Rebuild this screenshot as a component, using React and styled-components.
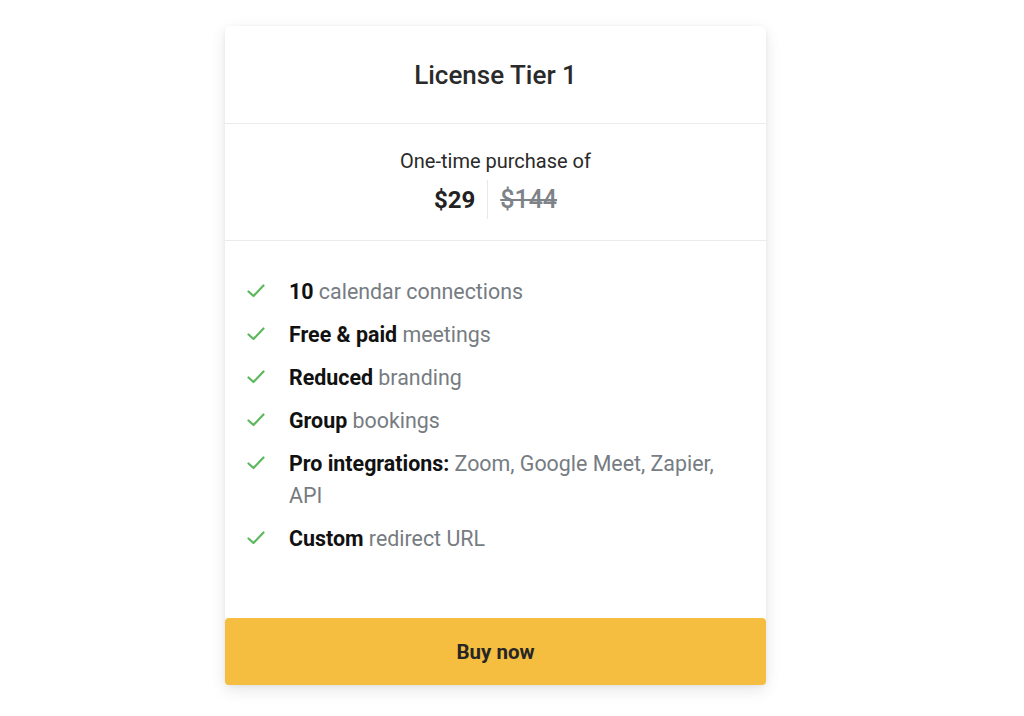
import React from "react";
import styled, { createGlobalStyle } from "styled-components";

const Global = createGlobalStyle`
  html, body { margin: 0; padding: 0; background: #ffffff; }
  body { font-family: Roboto, "Liberation Sans", Arial, sans-serif; -webkit-font-smoothing: antialiased; }
`;

const Page = styled.div`
  width: 1024px;
  height: 716px;
  display: flex;
  justify-content: flex-start;
  align-items: flex-start;
  padding: 26px 0 0 225px;
  box-sizing: border-box;
`;

const Card = styled.div`
  width: 541px;
  background: #fff;
  border-radius: 5px;
  box-shadow: 0 5px 16px rgba(0, 0, 0, 0.1), 0 1px 4px rgba(0, 0, 0, 0.05);
  display: flex;
  flex-direction: column;
`;

const Header = styled.div`
  height: 97px;
  display: flex;
  align-items: center;
  justify-content: center;
  border-bottom: 1px solid #e9ecef;
`;

const Title = styled.h2`
  margin: 0;
  font-size: 26px;
  font-weight: 500;
  color: #2a2a2a;
`;

const PriceSection = styled.div`
  height: 117px;
  box-sizing: border-box;
  padding-top: 23px;
  display: flex;
  flex-direction: column;
  align-items: center;
  border-bottom: 1px solid #e9ecef;
`;

const PriceLabel = styled.div`
  font-size: 20px;
  line-height: 28px;
  color: #2a2a2a;
`;

const PriceRow = styled.div`
  display: flex;
  align-items: stretch;
  margin-top: 5px;
  height: 39px;
`;

const Price = styled.span`
  display: flex;
  align-items: center;
  padding: 0 12px;
  font-size: ${(p) => (p.$old ? "25px" : "24px")};
  color: ${(p) => (p.$old ? "#7d8388" : "#222")};
  font-weight: ${(p) => (p.$old ? 500 : 700)};
  text-decoration: ${(p) => (p.$old ? "line-through" : "none")};
  text-decoration-thickness: 2px;
  border-left: ${(p) => (p.$old ? "1px solid #e6e8ea" : "none")};
`;

const Features = styled.ul`
  list-style: none;
  margin: 0;
  padding: 35px 40px 63px 22px;
  display: flex;
  flex-direction: column;
  gap: 11px;
`;

const Feature = styled.li`
  display: flex;
  align-items: flex-start;
  gap: 24px;
  font-size: 21.4px;
  line-height: 32px;
  color: #767c82;
`;

const CheckWrap = styled.span`
  flex: 0 0 18px;
  height: 32px;
  display: flex;
  align-items: center;
  margin-top: -1px;
`;

const Strong = styled.b`
  font-weight: 700;
  color: #111;
`;

const BuyButton = styled.button`
  height: 67px;
  border: none;
  border-radius: 4px;
  background: #f5be41;
  color: #262626;
  font-family: inherit;
  font-size: 20.5px;
  font-weight: 700;
  cursor: pointer;
`;

const Check = () => (
  <svg width="18" height="14" viewBox="0 0 18 14">
    <path d="M1.5 7.5 L6.5 12 L16.5 1.5" fill="none" stroke="#5cb85c" strokeWidth="2.2" strokeLinecap="round" strokeLinejoin="round" />
  </svg>
);

const features = [
  ["10", " calendar connections"],
  ["Free & paid", " meetings"],
  ["Reduced", " branding"],
  ["Group", " bookings"],
  ["Pro integrations:", " Zoom, Google Meet, Zapier, API"],
  ["Custom", " redirect URL"],
];

export default function App() {
  return (
    <>
      <Global />
      <Page>
        <Card>
          <Header>
            <Title>License Tier 1</Title>
          </Header>
          <PriceSection>
            <PriceLabel>One-time purchase of</PriceLabel>
            <PriceRow>
              <Price>$29</Price>
              <Price $old>$144</Price>
            </PriceRow>
          </PriceSection>
          <Features>
            {features.map(([b, r]) => (
              <Feature key={b}>
                <CheckWrap>
                  <Check />
                </CheckWrap>
                <span>
                  <Strong>{b}</Strong>
                  {r}
                </span>
              </Feature>
            ))}
          </Features>
          <BuyButton>Buy now</BuyButton>
        </Card>
      </Page>
    </>
  );
}
